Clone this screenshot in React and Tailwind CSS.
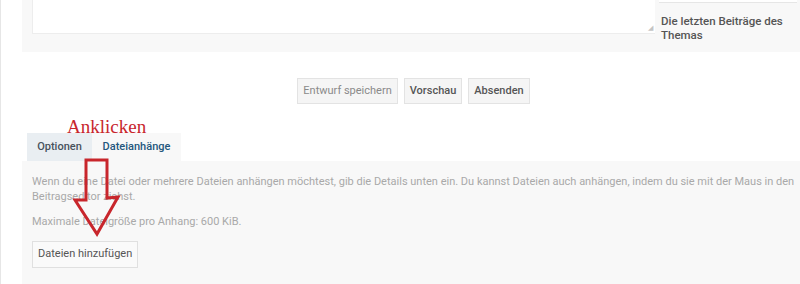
import React from 'react';

const btn =
  'h-[26px] px-[5px] flex items-center bg-[#f5f5f5] border border-[#e3e3e3] text-[11px]';

export default function App() {
  return (
    <div
      className="relative w-[800px] h-[284px] overflow-hidden bg-white border-l border-[#e6e6e6]"
      style={{ fontFamily: 'Roboto, "Liberation Sans", sans-serif' }}
    >
      {/* editor area */}
      <div className="ml-[21px] h-[52px] bg-[#f8f8f8] flex">
        <div className="relative ml-[10px] w-[623px] h-[34px] bg-white border-l border-b border-[#ededed]">
          <span className="absolute right-[2px] bottom-[1px] text-[7px] leading-none text-[#c4c4c4]">◢</span>
        </div>
        <div className="w-[144px] ml-[1px] px-[5px]">
          <div className="h-[3px] bg-white border-b border-[#e6e6e6] -mx-[2px]"></div>
          <p className="mt-[11px] text-[11.5px] leading-[14px] font-medium text-[#555]">
            Die letzten Beiträge des Themas
          </p>
        </div>
      </div>

      {/* action buttons */}
      <div className="mt-[26px] ml-[26px] flex justify-center gap-[6px]">
        <button className={`${btn} text-[#8a8a8a]`}>Entwurf speichern</button>
        <button className={`${btn} text-[#555] font-medium`}>Vorschau</button>
        <button className={`${btn} text-[#555] font-medium`}>Absenden</button>
      </div>

      {/* tabs */}
      <div className="mt-[29px] ml-[26px] flex h-[28px]">
        <div className="w-[65px] flex items-center justify-center bg-[#e9eef2] text-[11px] font-medium text-[#47525c]">
          Optionen
        </div>
        <div className="w-[89px] flex items-center justify-center bg-[#f8f8f8] text-[11px] font-medium text-[#24577d]">
          Dateianhänge
        </div>
      </div>

      {/* attachment panel */}
      <div className="ml-[21px] h-[200px] bg-[#f8f8f8] pl-[10px] pr-[4px] pt-[13px]">
        <p className="text-[11px] leading-[15px] text-[#a9a9a9]">
          Wenn du eine Datei oder mehrere Dateien anhängen möchtest, gib die Details unten ein. Du kannst Dateien auch anhängen, indem du sie mit der Maus in den Beitragseditor ziehst.
        </p>
        <p className="mt-[10px] text-[11px] leading-[15px] text-[#a9a9a9]">
          Maximale Dateigröße pro Anhang: 600 KiB.
        </p>
        <button className="mt-[12px] h-[27px] px-[5px] bg-[#fafafa] border border-[#e0e0e0] text-[11px] text-[#555]">
          Dateien hinzufügen
        </button>
      </div>

      {/* annotation */}
      <span
        className="absolute left-[66px] top-[117px] text-[19px] leading-none text-[#c8262c]"
        style={{ fontFamily: '"Liberation Serif", serif' }}
      >
        Anklicken
      </span>
      <svg className="absolute left-0 top-0 pointer-events-none" width="800" height="284">
        <polygon
          points="85,160 106,160 106,198 117,197 96,234 74,200 85,200"
          fill="none"
          stroke="#c8262c"
          strokeWidth="3"
          strokeLinejoin="miter"
        />
      </svg>
    </div>
  );
}
